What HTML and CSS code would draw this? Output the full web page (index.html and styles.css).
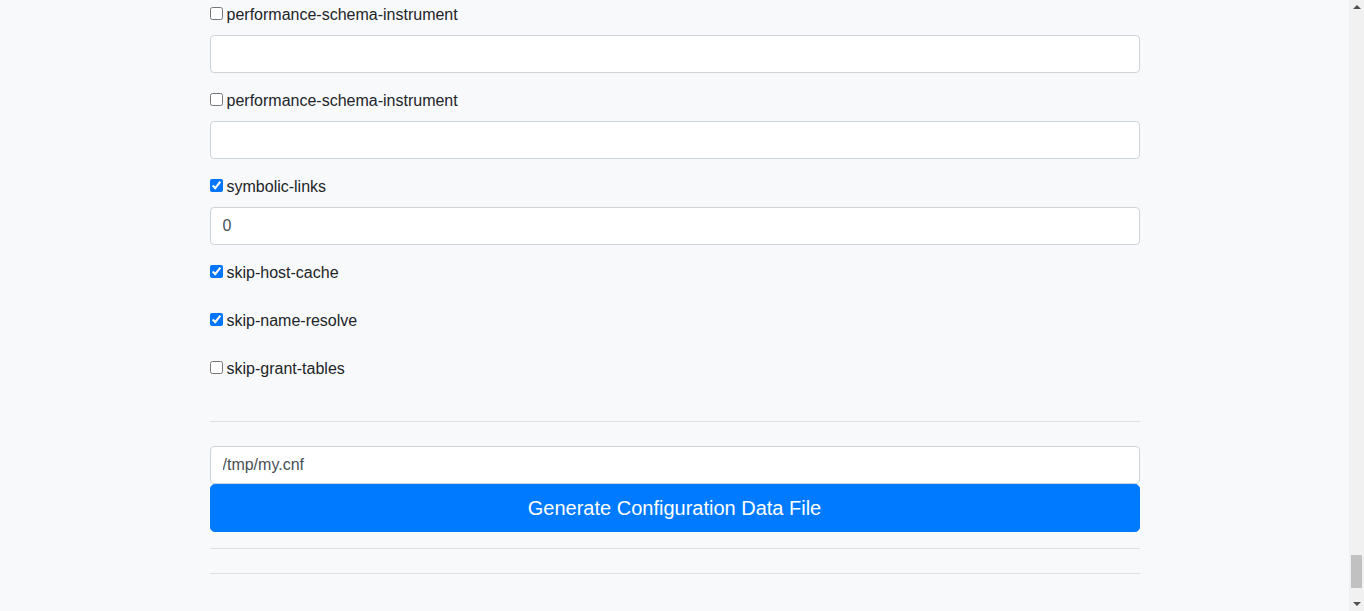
FILE: index.html
```html
<!DOCTYPE html>
<html lang="en">
<head>
<meta charset="utf-8">
<title>MySQL configuration</title>
<link rel="stylesheet" href="styles.css">
</head>
<body>
<div class="page">
  <div class="container">
    <form class="config-form">
      <div class="form-group">
        <label class="check-label"><input type="checkbox" class="check">performance-schema-instrument</label>
        <input type="text" class="form-control" value="">
      </div>
      <div class="form-group">
        <label class="check-label"><input type="checkbox" class="check">performance-schema-instrument</label>
        <input type="text" class="form-control" value="">
      </div>
      <div class="form-group">
        <label class="check-label"><input type="checkbox" class="check" checked>symbolic-links</label>
        <input type="text" class="form-control" value="0">
      </div>
      <div class="form-group">
        <label class="check-label"><input type="checkbox" class="check" checked>skip-host-cache</label>
      </div>
      <div class="form-group">
        <label class="check-label"><input type="checkbox" class="check" checked>skip-name-resolve</label>
      </div>
      <div class="form-group">
        <label class="check-label"><input type="checkbox" class="check">skip-grant-tables</label>
      </div>
      <hr class="divider divider-form">
      <div class="output-group">
        <input type="text" class="form-control" value="/tmp/my.cnf">
        <button type="button" class="btn-generate">Generate Configuration Data File</button>
      </div>
      <hr class="divider">
      <hr class="divider divider-last">
    </form>
  </div>
</div>
<div class="scrollbar" aria-hidden="true">
  <span class="scroll-arrow scroll-up"></span>
  <span class="scroll-thumb"></span>
  <span class="scroll-arrow scroll-down"></span>
</div>
</body>
</html>
```

FILE: styles.css
```css
html {
  background: #f8f9fa;
}
body {
  margin: 0;
  background: #f8f9fa;
  font-family: "Liberation Sans", Arial, Helvetica, sans-serif;
  font-size: 16px;
  line-height: 1.5;
  color: #212529;
}
.page {
  margin-right: 15px;
}
.container {
  width: 930px;
  margin: 0 auto;
  padding: 3px 0 0;
}
.config-form {
  margin: 0;
}
.form-group {
  display: flow-root;
  margin-bottom: 16px;
}
.check-label {
  display: flex;
  align-items: flex-start;
  height: 24px;
  margin-bottom: 8px;
}
.check {
  width: 13px;
  height: 13px;
  margin: 4px 4px 0 0;
}
.form-control {
  display: block;
  box-sizing: border-box;
  width: 100%;
  height: 38px;
  padding: 6px 12px;
  font-family: inherit;
  font-size: 16px;
  line-height: 1.5;
  color: #495057;
  background: #fff;
  border: 1px solid #ced4da;
  border-radius: 4px;
  margin: 0;
}
.divider {
  margin: 16px 0;
  border: 0;
  border-top: 1px solid rgba(0, 0, 0, 0.1);
  height: 0;
}
.divider-form {
  margin-top: 32px;
}
.output-group {
  margin-top: 24px;
}
.btn-generate {
  display: block;
  width: 100%;
  height: 48px;
  padding: 8px 16px;
  font-family: inherit;
  font-size: 20px;
  line-height: 1.5;
  color: #fff;
  background: #007bff;
  border: 1px solid #007bff;
  border-radius: 4.8px;
  cursor: pointer;
}
.divider-last {
  margin-top: 24px;
}

/* imitation of the browser's vertical scrollbar, scrolled to the bottom */
.scrollbar {
  position: fixed;
  top: 0;
  right: 0;
  width: 15px;
  height: 100%;
  background: #f1f1f1;
}
.scroll-arrow {
  position: absolute;
  left: 4px;
  width: 0;
  height: 0;
  border-left: 4px solid transparent;
  border-right: 4px solid transparent;
}
.scroll-up {
  top: 5px;
  border-bottom: 4px solid #505050;
}
.scroll-down {
  bottom: 5px;
  border-top: 4px solid #505050;
}
.scroll-thumb {
  position: absolute;
  left: 2px;
  right: 2px;
  bottom: 23px;
  height: 33px;
  background: #c1c1c1;
}
```
